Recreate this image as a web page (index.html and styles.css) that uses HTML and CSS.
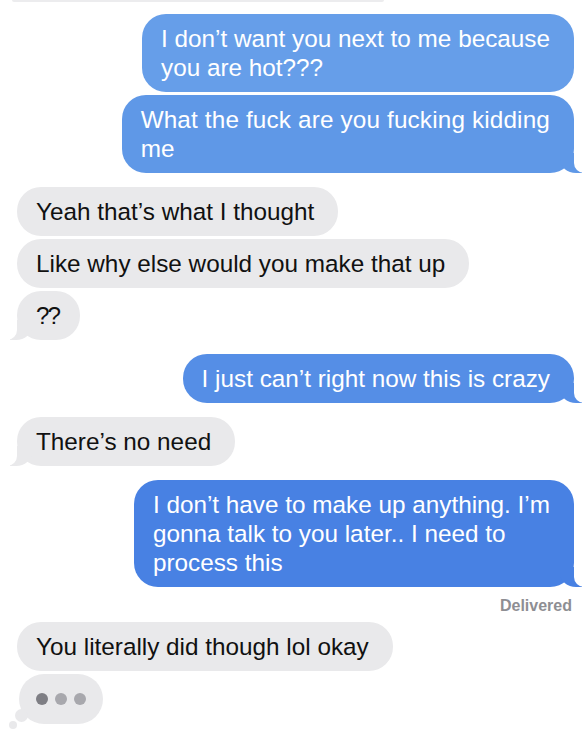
FILE: index.html
```html
<!DOCTYPE html>
<html lang="en">
<head>
<meta charset="utf-8">
<title>Messages</title>
<link rel="stylesheet" href="styles.css">
</head>
<body>
<main class="thread">
  <div class="prev"></div>

  <div class="row out first">
    <div class="bubble sent c1">I don’t want you next to me because<br>you are hot???</div>
  </div>
  <div class="row out same">
    <div class="bubble sent c2 tail wide">What the fuck are you fucking kidding<br>me</div>
  </div>

  <div class="row in group">
    <div class="bubble recv">Yeah that’s what I thought</div>
  </div>
  <div class="row in same">
    <div class="bubble recv">Like why else would you make that up</div>
  </div>
  <div class="row in same">
    <div class="bubble recv tail short">??</div>
  </div>

  <div class="row out group">
    <div class="bubble sent c3 tail">I just can’t right now this is crazy</div>
  </div>

  <div class="row in group">
    <div class="bubble recv tail">There’s no need</div>
  </div>

  <div class="row out group">
    <div class="bubble sent c4 tail">I don’t have to make up anything. I’m<br>gonna talk to you later.. I need to<br>process this</div>
  </div>
  <div class="status">Delivered</div>

  <div class="row in after-status">
    <div class="bubble recv">You literally did though lol okay</div>
  </div>
  <div class="row in same">
    <div class="typing" aria-label="typing">
      <span class="dot d1"></span><span class="dot"></span><span class="dot"></span>
    </div>
  </div>
</main>
</body>
</html>
```

FILE: styles.css
```css
* { box-sizing: border-box; }

html, body {
  margin: 0;
  padding: 0;
  background: #ffffff;
}

body {
  font-family: "Liberation Sans", Arial, sans-serif;
  width: 588px;
  height: 738px;
  overflow: hidden;
}

.thread {
  display: flex;
  flex-direction: column;
}

.prev {
  height: 2px;
  width: 372px;
  margin-left: 12px;
  background: #ececee;
  border-radius: 0 0 6px 6px;
}

.row {
  display: flex;
}

.row.out {
  justify-content: flex-end;
  padding-right: 14px;
}

.row.in {
  justify-content: flex-start;
  padding-left: 17px;
}

.row.first { margin-top: 12px; }
.row.same { margin-top: 3px; }
.row.group { margin-top: 14px; }
.row.after-status { margin-top: 6px; }

.bubble {
  position: relative;
  font-size: 24.3px;
  line-height: 29px;
  padding: 10px 24px 10px 19px;
  border-radius: 24px;
  white-space: nowrap;
}

.bubble.wide {
  letter-spacing: 0.15px;
}

.bubble.short {
  letter-spacing: -2px;
  padding-right: 21px;
}

.sent {
  color: #ffffff;
}

.recv {
  color: #111111;
  background: #e9e9eb;
}

.c1 { background: #669ee9; }
.c2 { background: #5f98e7; }
.c3 { background: #558ee6; }
.c4 { background: #4881e3; }

/* message tails */
.sent.tail::before {
  content: "";
  position: absolute;
  bottom: 0;
  right: -8px;
  width: 22px;
  height: 20px;
  background: inherit;
  border-bottom-left-radius: 16px 14px;
}

.sent.tail::after {
  content: "";
  position: absolute;
  bottom: 0;
  right: -12px;
  width: 12px;
  height: 22px;
  background: #ffffff;
  border-bottom-left-radius: 10px;
}

.recv.tail::before {
  content: "";
  position: absolute;
  bottom: 0;
  left: -7px;
  width: 22px;
  height: 20px;
  background: inherit;
  border-bottom-right-radius: 16px 14px;
}

.recv.tail::after {
  content: "";
  position: absolute;
  bottom: 0;
  left: -12px;
  width: 12px;
  height: 22px;
  background: #ffffff;
  border-bottom-right-radius: 10px;
}

.status {
  margin-top: 9px;
  align-self: flex-end;
  padding-right: 16px;
  font-size: 16px;
  line-height: 20px;
  font-weight: bold;
  color: #8e8e93;
}

.typing {
  position: relative;
  display: flex;
  align-items: center;
  gap: 7px;
  height: 50px;
  padding: 0 17px;
  margin-left: 2px;
  border-radius: 25px;
  background: #e9e9eb;
}

.typing::before {
  content: "";
  position: absolute;
  left: -4px;
  top: 35px;
  width: 13px;
  height: 13px;
  border-radius: 50%;
  background: #e9e9eb;
}

.typing::after {
  content: "";
  position: absolute;
  left: -10px;
  top: 47px;
  width: 8px;
  height: 8px;
  border-radius: 50%;
  background: #e9e9eb;
}

.dot {
  width: 12px;
  height: 12px;
  border-radius: 50%;
  background: #a8a8ad;
}

.dot.d1 {
  background: #7e7e84;
}
```
